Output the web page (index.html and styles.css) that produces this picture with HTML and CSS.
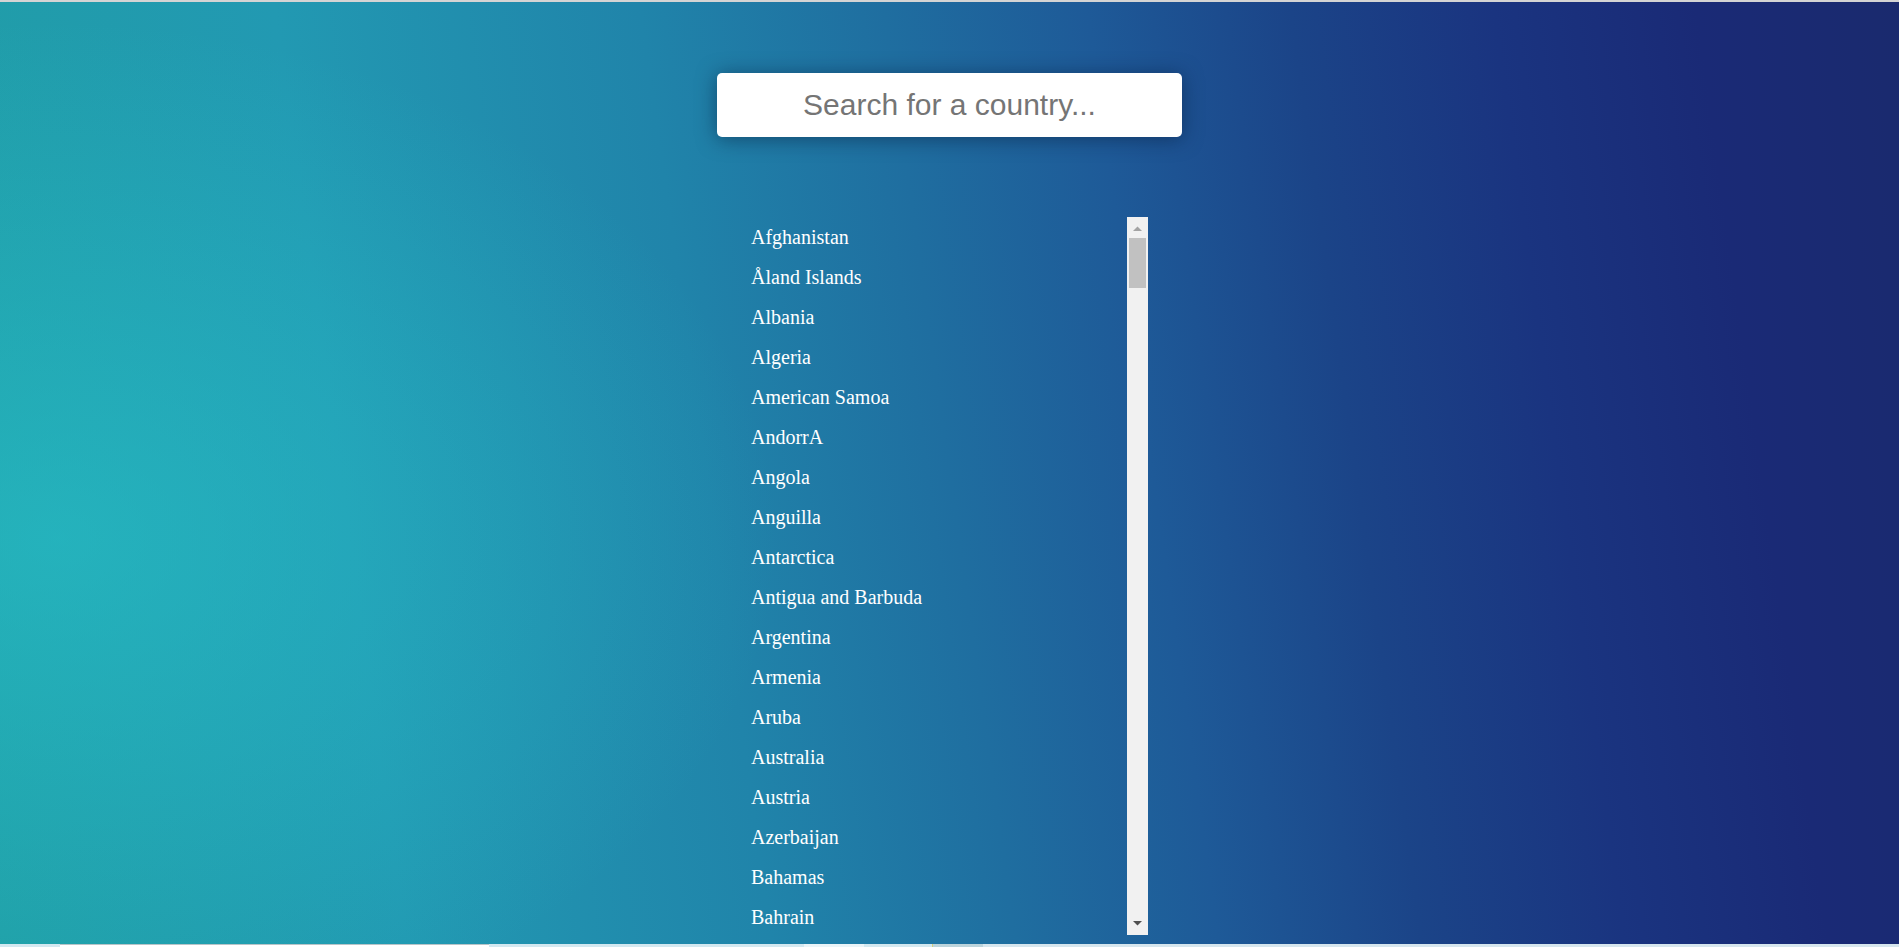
FILE: index.html
```html
<!DOCTYPE html>
<html lang="en">
<head>
<meta charset="utf-8">
<title>Country search</title>
<link rel="stylesheet" href="styles.css">
</head>
<body>
<div class="topline"></div>
<main class="page">
  <input class="search" type="text" placeholder="Search for a country...">
  <div class="listbox">
    <ul class="countries">
      <li>Afghanistan</li>
      <li>Åland Islands</li>
      <li>Albania</li>
      <li>Algeria</li>
      <li>American Samoa</li>
      <li>AndorrA</li>
      <li>Angola</li>
      <li>Anguilla</li>
      <li>Antarctica</li>
      <li>Antigua and Barbuda</li>
      <li>Argentina</li>
      <li>Armenia</li>
      <li>Aruba</li>
      <li>Australia</li>
      <li>Austria</li>
      <li>Azerbaijan</li>
      <li>Bahamas</li>
      <li>Bahrain</li>
    </ul>
    <div class="scrollbar" aria-hidden="true">
      <div class="sb-btn">
        <svg width="21" height="21" viewBox="0 0 21 21"><polygon points="6,14 15,14 10.5,9.5" fill="#a3a3a3"/></svg>
      </div>
      <div class="sb-track"><div class="sb-thumb"></div></div>
      <div class="sb-btn">
        <svg width="21" height="21" viewBox="0 0 21 21"><polygon points="6,7 15,7 10.5,11.5" fill="#505050"/></svg>
      </div>
    </div>
  </div>
</main>
<div class="taskbar">
  <div class="taskbar-seg taskbar-left"></div>
  <div class="taskbar-seg taskbar-white"></div>
  <div class="taskbar-seg taskbar-mid"></div>
  <div class="taskbar-seg taskbar-light"></div>
  <div class="taskbar-seg taskbar-mid2"></div>
  <div class="taskbar-seg taskbar-grey"></div>
  <div class="taskbar-seg taskbar-rest"></div>
</div>
</body>
</html>
```
FILE: styles.css
```css
html, body {
  margin: 0;
  padding: 0;
  height: 100%;
}

body {
  display: flex;
  flex-direction: column;
  height: 947px;
  overflow: hidden;
  font-family: "Liberation Serif", "Times New Roman", serif;
}

.topline {
  height: 2px;
  background: #d4d4d4;
  flex: none;
}

.page {
  flex: 1;
  display: flex;
  flex-direction: column;
  align-items: center;
  padding-top: 71px;
  min-height: 0;
  background:
    radial-gradient(ellipse 38% 55% at 3% 57%, rgba(40, 196, 204, 0.55) 0%, rgba(40, 196, 204, 0) 100%),
    linear-gradient(82deg, #209ea6 0%, #2299b2 20%, #2084aa 38%, #1f6ea0 50%, #1e5a98 60%, #1b4488 70%, #1a3480 80%, #1a2a76 90%, #1a2a6e 100%);
}

.search {
  width: 465px;
  height: 64px;
  box-sizing: border-box;
  border: none;
  border-radius: 5px;
  background: #ffffff;
  box-shadow: 0 2px 20px rgba(5, 25, 55, 0.5);
  font-family: "Liberation Sans", Arial, sans-serif;
  font-size: 30px;
  text-align: center;
  color: #333;
  outline: none;
  padding: 0 12px;
  flex: none;
}

.search::placeholder {
  color: #757575;
}

.listbox {
  display: flex;
  width: 397px;
  height: 718px;
  margin-top: 80px;
  flex: none;
}

.countries {
  flex: 1;
  list-style: none;
  margin: 0;
  padding: 0;
  overflow: hidden;
}

.countries li {
  color: #ffffff;
  font-size: 20px;
  line-height: 40px;
  white-space: nowrap;
}

.scrollbar {
  width: 21px;
  flex: none;
  display: flex;
  flex-direction: column;
  background: #f1f1f1;
}

.sb-btn {
  height: 21px;
  flex: none;
  display: flex;
}

.sb-btn svg {
  display: block;
}

.sb-track {
  flex: 1;
  padding: 0 2px;
}

.sb-thumb {
  height: 50px;
  background: #c1c1c1;
}

.taskbar {
  height: 3px;
  flex: none;
  display: flex;
  background: #d3e8f0;
}

.taskbar-seg {
  height: 100%;
}

.taskbar-left { width: 60px; background: #d3e8f0; }
.taskbar-white { width: 429px; background: #ffffff; box-shadow: inset 0 1px 0 #b8c4c8; }
.taskbar-mid { width: 315px; background: #d3e8f0; }
.taskbar-light { width: 60px; background: #eaf4f8; }
.taskbar-mid2 { width: 68px; background: #d3e8f0; }
.taskbar-grey { width: 51px; background: #bcd4dc; box-shadow: inset 1px 0 0 #d8d07a; }
.taskbar-rest { flex: 1; background: #d6e6ee; }
```
